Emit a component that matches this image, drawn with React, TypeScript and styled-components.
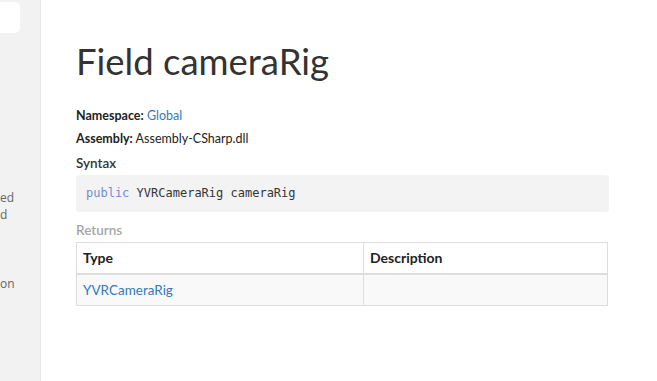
import React from "react";
import styled, { createGlobalStyle } from "styled-components";

const Global = createGlobalStyle`
  html, body { margin: 0; padding: 0; background: #fff; }
  body { font-family: Lato, "Open Sans", sans-serif; color: #333; }
  * { box-sizing: border-box; }
`;

const Page = styled.div`
  display: flex;
  height: 381px;
  overflow: hidden;
`;

const Sidebar = styled.aside`
  width: 41px;
  flex: none;
  background: #f2f2f2;
  border-right: 1px solid #e6e6e6;
  overflow: hidden;
  display: flex;
  flex-direction: column;
  font-family: "Open Sans", sans-serif;
`;

const SearchBox = styled.div`
  margin-top: 2px;
  width: 20px;
  height: 31px;
  background: #fff;
  border-radius: 0 5px 5px 0;
`;

const NavList = styled.ul`
  list-style: none;
  margin: 156px 0 0;
  padding: 0;
  font-size: 12px;
  line-height: 17px;
  color: #666;
  white-space: nowrap;
`;

const NavItem = styled.li<{ $gap?: number }>`
  margin-top: ${(p) => p.$gap ?? 0}px;
`;

const Main = styled.main`
  flex: 1;
  padding: 36px 0 0 35px;
`;

const Content = styled.div`
  width: 533px;
`;

const Title = styled.h1`
  margin: 0 0 22px;
  font-size: 36.5px;
  font-weight: 400;
  line-height: 50px;
  color: #333;
`;

const Meta = styled.div`
  font-size: 12.5px;
  line-height: 16px;
  margin-bottom: 7px;
  color: #222;
`;

const Label = styled.strong`
  font-weight: 700;
`;

const Link = styled.a`
  color: #337ab7;
  text-decoration: none;
`;

const SectionHeading = styled.h5<{ $muted?: boolean }>`
  margin: 0 0 3px;
  font-size: 13.5px;
  line-height: 18px;
  font-weight: 600;
  color: ${(p) => (p.$muted ? "#a6a6a6" : "#333")};
`;

const CodeBlock = styled.pre`
  margin: 0 0 9px;
  padding: 10px 10px;
  background: #f3f3f3;
  border-radius: 4px;
  font-family: "DejaVu Sans Mono", "Liberation Mono", monospace;
  font-size: 12px;
  line-height: 17px;
  color: #333;
`;

const Keyword = styled.span`
  color: #6d8fcc;
`;

const Table = styled.table`
  width: 532px;
  border-collapse: collapse;
  font-size: 13.5px;
`;

const Th = styled.th<{ $w?: number }>`
  text-align: left;
  font-weight: 700;
  font-size: 14px;
  color: #222;
  height: 31px;
  padding: 0 6px;
  border: 1px solid #ddd;
  border-bottom-width: 2px;
  width: ${(p) => (p.$w ? `${p.$w}px` : "auto")};
`;

const Td = styled.td`
  height: 32px;
  padding: 0 6px;
  border: 1px solid #ddd;
  background: #f9f9f9;
`;

export default function App() {
  return (
    <>
      <Global />
      <Page>
        <Sidebar>
          <SearchBox />
          <NavList>
            <NavItem>ed</NavItem>
            <NavItem>d</NavItem>
            <NavItem $gap={52}>on</NavItem>
          </NavList>
        </Sidebar>
        <Main>
          <Content>
            <Title>Field cameraRig</Title>
            <Meta>
              <Label>Namespace:</Label> <Link href="#">Global</Link>
            </Meta>
            <Meta>
              <Label>Assembly:</Label> Assembly-CSharp.dll
            </Meta>
            <SectionHeading>Syntax</SectionHeading>
            <CodeBlock>
              <Keyword>public</Keyword> YVRCameraRig cameraRig
            </CodeBlock>
            <SectionHeading $muted>Returns</SectionHeading>
            <Table>
              <thead>
                <tr>
                  <Th $w={287}>Type</Th>
                  <Th>Description</Th>
                </tr>
              </thead>
              <tbody>
                <tr>
                  <Td>
                    <Link href="#">YVRCameraRig</Link>
                  </Td>
                  <Td></Td>
                </tr>
              </tbody>
            </Table>
          </Content>
        </Main>
      </Page>
    </>
  );
}
